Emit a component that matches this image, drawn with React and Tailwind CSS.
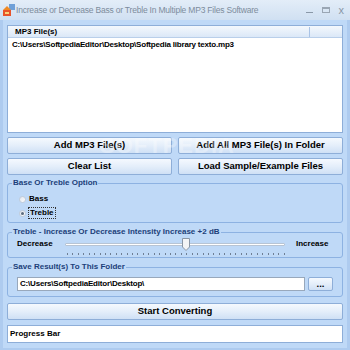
import React from 'react';

const font = { fontFamily: '"Liberation Sans", Arial, sans-serif' };

const Btn = ({ children, className = '' }) => (
    <button
        className={`flex items-center justify-center rounded-[2px] border border-[#8eaed8] bg-gradient-to-b from-[#f5f9fe] via-[#e4eefa] to-[#cfe0f5] text-[9.5px] font-bold text-black ${className}`}
    >
        {children}
    </button>
);

const Group = ({ title, className = '', children }) => (
    <fieldset className={`rounded-[3px] border border-[#8db2e2] px-[4px] ${className}`}>
        <legend className="px-[1px] text-[8px] font-bold leading-[12px] text-[#1c3f7a]">{title}</legend>
        {children}
    </fieldset>
);

const Radio = ({ checked }) => (
    <span className="flex h-[7px] w-[7px] items-center justify-center rounded-full border border-[#c3ccd8] bg-gradient-to-br from-[#e2e7ee] to-[#fbfcfd]">
        {checked && <span className="h-[3px] w-[3px] rounded-full bg-[#5b6b7e]" />}
    </span>
);

const AppIcon = () => (
    <svg width="13" height="13" viewBox="0 0 13 13">
        <rect x="7" y="0" width="6" height="6" fill="#6fa0d8" />
        <path d="M1 6 L5 2 L9 6 Z" fill="#f08a24" />
        <rect x="1" y="6" width="8" height="6" fill="#e8542a" />
        <rect x="3" y="8" width="4" height="2" fill="#fbd27a" />
    </svg>
);

export default function App() {
    const ticks = Array.from({ length: 41 });

    return (
        <div className="relative flex h-[350px] w-[350px] flex-col overflow-hidden bg-[#bfd9f7]" style={font}>
            {/* title bar */}
            <div className="flex h-[20px] shrink-0 items-center bg-gradient-to-b from-[#e3edf8] to-[#d0e0f2] pl-[2px] pr-[6px]">
                <AppIcon />
                <span className="ml-[1px] whitespace-nowrap text-[8.5px] tracking-[-0.2px] text-[#7d8c9c]">
                    Increase or Decrease Bass or Treble In Multiple MP3 Files Software
                </span>
                <div className="ml-auto flex items-center gap-[9px] text-[#8a98a8]">
                    <span className="mt-[4px] h-[1px] w-[7px] bg-[#8a98a8]" />
                    <span className="h-[6px] w-[8px] border border-t-2 border-[#9aa6b4]" />
                    <span className="text-[11px] leading-none">x</span>
                </div>
            </div>

            <div className="flex flex-1 flex-col border-x-[3px] border-b-[2px] border-[#aecbef] px-[4px] pt-[5px]">
                {/* file list */}
                <div className="flex h-[108px] flex-col border border-[#8eaed8] bg-white">
                    <div className="flex h-[12px] shrink-0 items-center border-b border-[#b9cfea] bg-gradient-to-b from-[#f4f8fd] to-[#dbe8f7]">
                        <span className="w-[302px] border-r border-[#a9c3e6] pl-[7px] text-[8px] font-bold leading-[10px]">MP3 File(s)</span>
                    </div>
                    <div className="pl-[4px] pt-[1px] text-[8px] font-bold leading-[12px] tracking-[-0.2px]">
                        C:\Users\SoftpediaEditor\Desktop\Softpedia library texto.mp3
                    </div>
                </div>

                {/* buttons */}
                <div className="mt-[4px] grid grid-cols-2 gap-x-[6px] gap-y-[4px]">
                    <Btn className="h-[17px]">Add MP3 File(s)</Btn>
                    <Btn className="h-[17px]">Add All MP3 File(s) In Folder</Btn>
                    <Btn className="h-[17px]">Clear List</Btn>
                    <Btn className="h-[17px]">Load Sample/Example Files</Btn>
                </div>

                <Group title="Base Or Treble Option" className="mt-[2px] h-[46px]">
                    <div className="flex flex-col pl-[7px] pt-[3px] text-[8px] font-bold">
                        <div className="flex h-[14px] items-center gap-[3px]">
                            <Radio />
                            <span>Bass</span>
                        </div>
                        <div className="flex h-[14px] items-center gap-[2px]">
                            <Radio checked />
                            <span className="border border-dotted border-[#333] px-[1px] leading-[10px]">Treble</span>
                        </div>
                    </div>
                </Group>

                <Group title="Treble - Increase Or Decrease Intensity Increase +2 dB" className="mt-[3px] h-[32px]">
                    <div className="flex h-[12px] items-center pl-[5px] text-[8px] font-bold">
                        <span className="w-[48px]">Decrease</span>
                        <div className="relative h-[12px] w-[220px]">
                            <div className="absolute left-0 right-0 top-[5px] h-[3px] rounded-[1px] border border-[#b7c4d4] bg-white" />
                            <svg className="absolute left-[117px] top-0" width="8" height="13" viewBox="0 0 8 13">
                                <path d="M0.5 0.5 H7.5 V9 L4 12.5 L0.5 9 Z" fill="#f3f4f6" stroke="#8a96a6" />
                            </svg>
                        </div>
                        <span className="ml-[11px]">Increase</span>
                    </div>
                    <div className="ml-[55px] mt-[3px] flex w-[218px] justify-between">
                        {ticks.map((_, i) => (
                            <span key={i} className="h-[2px] w-[1px] bg-[#6f7f94]" />
                        ))}
                    </div>
                </Group>

                <Group title="Save Result(s) To This Folder" className="mt-[3px] h-[36px]">
                    <div className="flex items-center pl-[5px] pt-[4px]">
                        <div className="flex h-[14px] w-[288px] items-center border border-[#98a8bc] bg-white pl-[2px] text-[8px] font-bold leading-none tracking-[-0.2px]">
                            C:\Users\SoftpediaEditor\Desktop\
                        </div>
                        <Btn className="ml-[3px] h-[14px] w-[25px] leading-none">...</Btn>
                    </div>
                </Group>

                <Btn className="mt-[6px] h-[17px]">Start Converting</Btn>

                <div className="mt-[5px] flex h-[18px] items-center border border-[#8eaed8] bg-white pl-[2px] text-[8px] font-bold">
                    Progress Bar
                </div>
            </div>

            <span className="pointer-events-none absolute left-[100px] top-[129px] text-[22px] font-bold tracking-[1px] text-white opacity-30">
                SOFTPEDIA
            </span>
        </div>
    );
}
